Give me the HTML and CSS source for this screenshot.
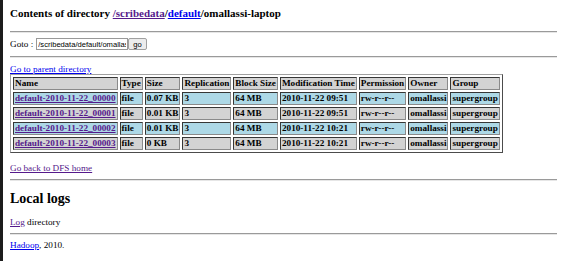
FILE: index.html
```html
<!DOCTYPE html>
<html lang="en">
<head>
    <meta charset="UTF-8">
    <title>Hadoop NameNode omallassi-laptop:8020</title>
    <link rel="stylesheet" href="styles.css">
</head>
<body>
    <h3 class="dir-title">Contents of directory <a href="#" class="visited">/scribedata</a>/<a href="#">default</a>/omallassi-laptop</h3>
    <hr>
    <form class="goto">
        Goto : <input type="text" class="goto-input" value="/scribedata/default/omallassi-laptop"><button type="button" class="goto-btn">go</button>
    </form>
    <hr>
    <a href="#" class="parent-link">Go to parent directory</a>
    <table class="listing">
        <tr class="head">
            <td>Name</td><td>Type</td><td>Size</td><td>Replication</td><td>Block Size</td><td>Modification Time</td><td>Permission</td><td>Owner</td><td>Group</td>
        </tr>
        <tr class="blue">
            <td><a href="#" class="visited">default-2010-11-22_00000</a></td><td>file</td><td>0.07 KB</td><td>3</td><td>64 MB</td><td>2010-11-22 09:51</td><td>rw-r--r--</td><td>omallassi</td><td>supergroup</td>
        </tr>
        <tr class="grey">
            <td><a href="#" class="visited">default-2010-11-22_00001</a></td><td>file</td><td>0.01 KB</td><td>3</td><td>64 MB</td><td>2010-11-22 09:51</td><td>rw-r--r--</td><td>omallassi</td><td>supergroup</td>
        </tr>
        <tr class="blue">
            <td><a href="#" class="visited">default-2010-11-22_00002</a></td><td>file</td><td>0.01 KB</td><td>3</td><td>64 MB</td><td>2010-11-22 10:21</td><td>rw-r--r--</td><td>omallassi</td><td>supergroup</td>
        </tr>
        <tr class="grey">
            <td><a href="#" class="visited">default-2010-11-22_00003</a></td><td>file</td><td>0 KB</td><td>3</td><td>64 MB</td><td>2010-11-22 10:21</td><td>rw-r--r--</td><td>omallassi</td><td>supergroup</td>
        </tr>
    </table>
    <p class="home"><a href="#" class="visited">Go back to DFS home</a></p>
    <hr>
    <h2 class="logs-title">Local logs</h2>
    <p class="logs"><a href="#" class="visited">Log</a> directory</p>
    <hr>
    <p class="footer"><a href="#">Hadoop</a>, 2010.</p>
</body>
</html>
```

FILE: styles.css
```css
html {
    border-left: 3px solid #1c1c1c;
    min-height: 100%;
    box-sizing: border-box;
}

body {
    font-family: "Liberation Serif", serif;
    font-size: 9.2px;
    line-height: 11px;
    margin: 0 8px 0 7px;
    color: #000;
    background: #fff;
}

a {
    color: #0000ee;
}

a.visited {
    color: #551a8b;
}

hr {
    border: none;
    border-top: 1px solid #9a9a9a;
    border-bottom: 1px solid #e6e6e6;
    margin: 0;
}

.dir-title {
    font-size: 11px;
    line-height: 13px;
    margin: 0;
    padding: 7px 0 11px;
}

.goto {
    margin: 0;
    padding: 5px 0 6px;
    display: flex;
    align-items: center;
}

.goto-input {
    font-family: "Liberation Sans", sans-serif;
    font-size: 7.6px;
    width: 92px;
    height: 12px;
    padding: 0 1px;
    margin: 0 0 0 3px;
    border: 1px solid #999;
    box-sizing: border-box;
}

.goto-btn {
    font-family: "Liberation Sans", sans-serif;
    font-size: 7.6px;
    height: 12px;
    padding: 0 4px;
    margin: 0;
    border: 1px solid #a0a0a0;
    border-radius: 2px;
    background: #ececec;
}

.parent-link {
    display: inline-block;
    margin-top: 6px;
}

.listing {
    border: 1px outset #a0a0a0;
    border-spacing: 2px;
    font-weight: bold;
    margin-top: -1px;
}

.listing td {
    border: 1px inset #8a8a8a;
    padding: 0 1px;
    height: 11px;
    line-height: 11px;
    white-space: nowrap;
}

.listing .head td {
    background: #d3d3d3;
}

.listing .blue td {
    background: #add8e6;
}

.listing .grey td {
    background: #d3d3d3;
}

.home {
    margin: 10px 0 5px;
}

.logs-title {
    font-size: 14px;
    line-height: 17px;
    margin: 9px 0 10px;
}

.logs {
    margin: 0 0 5px;
}

.footer {
    margin: 5px 0;
}
```
